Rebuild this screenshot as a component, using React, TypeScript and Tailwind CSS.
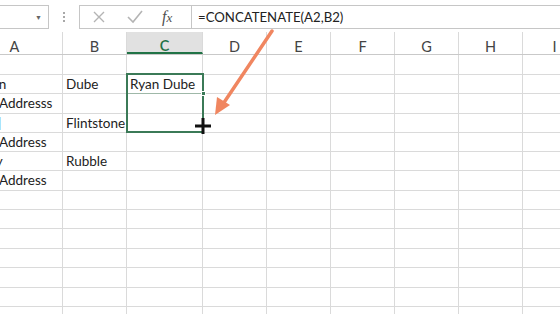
const cols = [
  { key: "A", w: "w-[96px] ml-[-33px]" },
  { key: "B", w: "w-[64px]" },
  { key: "C", w: "w-[76px]" },
  { key: "D", w: "w-[64px]" },
  { key: "E", w: "w-[64px]" },
  { key: "F", w: "w-[64px]" },
  { key: "G", w: "w-[64px]" },
  { key: "H", w: "w-[64px]" },
  { key: "I", w: "w-[64px]" },
];

const rowHeights = [
  "h-[20px]", "h-[19px]", "h-[20px]", "h-[19px]", "h-[19px]", "h-[19px]", "h-[20px]",
  "h-[19px]", "h-[19px]", "h-[20px]", "h-[19px]", "h-[20px]", "h-[19px]", "h-[19px]",
];

type Cell = { text: string; cls?: string };
const data: Record<number, Record<string, Cell>> = {
  1: { A: { text: "Ryan", cls: "pl-[10px]" }, B: { text: "Dube" }, C: { text: "Ryan Dube" } },
  2: { A: { text: "Addresss", cls: "pl-[32px]" } },
  3: { A: { text: "|", cls: "pl-[31px] text-[#5b8bd6]" }, B: { text: "Flintstone" } },
  4: { A: { text: "Address", cls: "pl-[32px]" } },
  5: { A: { text: "Barney", cls: "ml-[-6px]" }, B: { text: "Rubble" } },
  6: { A: { text: "Address", cls: "pl-[32px]" } },
};

function Toolbar() {
  return (
    <div className="h-[32px] flex items-start pt-[5px] bg-white">
      <div className="w-[49px] h-[24px] border border-[#c6c6c6] border-l-0 flex items-center justify-end pr-[6px]">
        <span className="text-[7px] text-[#666]">▼</span>
      </div>
      <div className="w-[30px] h-[24px] flex flex-col items-center justify-center gap-[2px]">
        <span className="w-[2px] h-[2px] bg-[#a8a8a8]" />
        <span className="w-[2px] h-[2px] bg-[#a8a8a8]" />
        <span className="w-[2px] h-[2px] bg-[#a8a8a8]" />
      </div>
      <div className="w-[113px] h-[24px] border border-[#c6c6c6] flex items-center">
        <svg width="36" height="16" viewBox="0 0 36 16" className="ml-[1px]">
          <path d="M13 3 L23 13 M23 3 L13 13" stroke="#b4b4b4" strokeWidth="1.4" fill="none" />
        </svg>
        <svg width="38" height="16" viewBox="0 0 38 16">
          <path d="M11 8 L16 13 L25 2" stroke="#b4b4b4" strokeWidth="1.6" fill="none" />
        </svg>
        <span className="ml-[7px] text-[16px] italic text-[#505050] font-['Liberation_Serif',serif]">
          f<span className="text-[13px]">x</span>
        </span>
      </div>
      <div className="flex-1 h-[24px] border border-[#c6c6c6] border-l-0 border-r-0 flex items-center pl-[6px] pt-[1px] text-[13.2px] text-[#222]">
        =CONCATENATE(A2,B2)
      </div>
    </div>
  );
}

function HeaderRow() {
  return (
    <div className="flex h-[23px] border-b border-[#c9c9c9]">
      {cols.map((c) => (
        <div
          key={c.key}
          className={`${c.w} shrink-0 h-full border-r border-[#dadada] flex items-center justify-center pt-[9px] leading-none text-[14.5px] ${
            c.key === "C" ? "bg-[#e1e1e1] text-[#217346] border-b-2 border-b-[#217346] font-semibold" : "text-[#444]"
          }`}
        >
          {c.key}
        </div>
      ))}
    </div>
  );
}

export default function App() {
  return (
    <div className="relative w-[560px] h-[314px] overflow-hidden bg-white font-['Lato','Liberation_Sans',sans-serif] text-[#222]">
      <Toolbar />
      <HeaderRow />
      {rowHeights.map((h, r) => (
        <div key={r} className={`flex ${h}`}>
          {cols.map((c) => {
            const cell = data[r]?.[c.key];
            return (
              <div
                key={c.key}
                className={`${c.w} shrink-0 h-full border-r border-b border-[#dadada] flex items-center leading-none pt-[1px] text-[13.5px] whitespace-nowrap overflow-visible`}
              >
                {cell && <span className={cell.cls ?? "pl-[3px]"}>{cell.text}</span>}
              </div>
            );
          })}
        </div>
      ))}

      {/* selection */}
      <div className="absolute left-[126px] top-[73px] w-[78px] h-[60px] border-2 border-[#3b7a57]" />
      <div className="absolute left-[128px] top-[93px] w-[74px] h-px bg-[#9fb8a8]" />
      <div className="absolute left-[201px] top-[91px] w-[5px] h-[5px] bg-[#3b7a57] border border-white" />

      {/* fill cursor */}
      <svg className="absolute left-[194px] top-[117px]" width="18" height="18" viewBox="0 0 18 18">
        <path d="M9 1 V17 M1 9 H17" stroke="#111" strokeWidth="3" />
      </svg>

      {/* arrow */}
      <svg className="absolute left-0 top-0" width="560" height="314" viewBox="0 0 560 314">
        <path d="M272 31 L223 104" stroke="#f08660" strokeWidth="3.5" strokeLinecap="round" fill="none" />
        <path d="M215 115 L217 97 L230 105 Z" fill="#f08660" />
      </svg>
    </div>
  );
}
